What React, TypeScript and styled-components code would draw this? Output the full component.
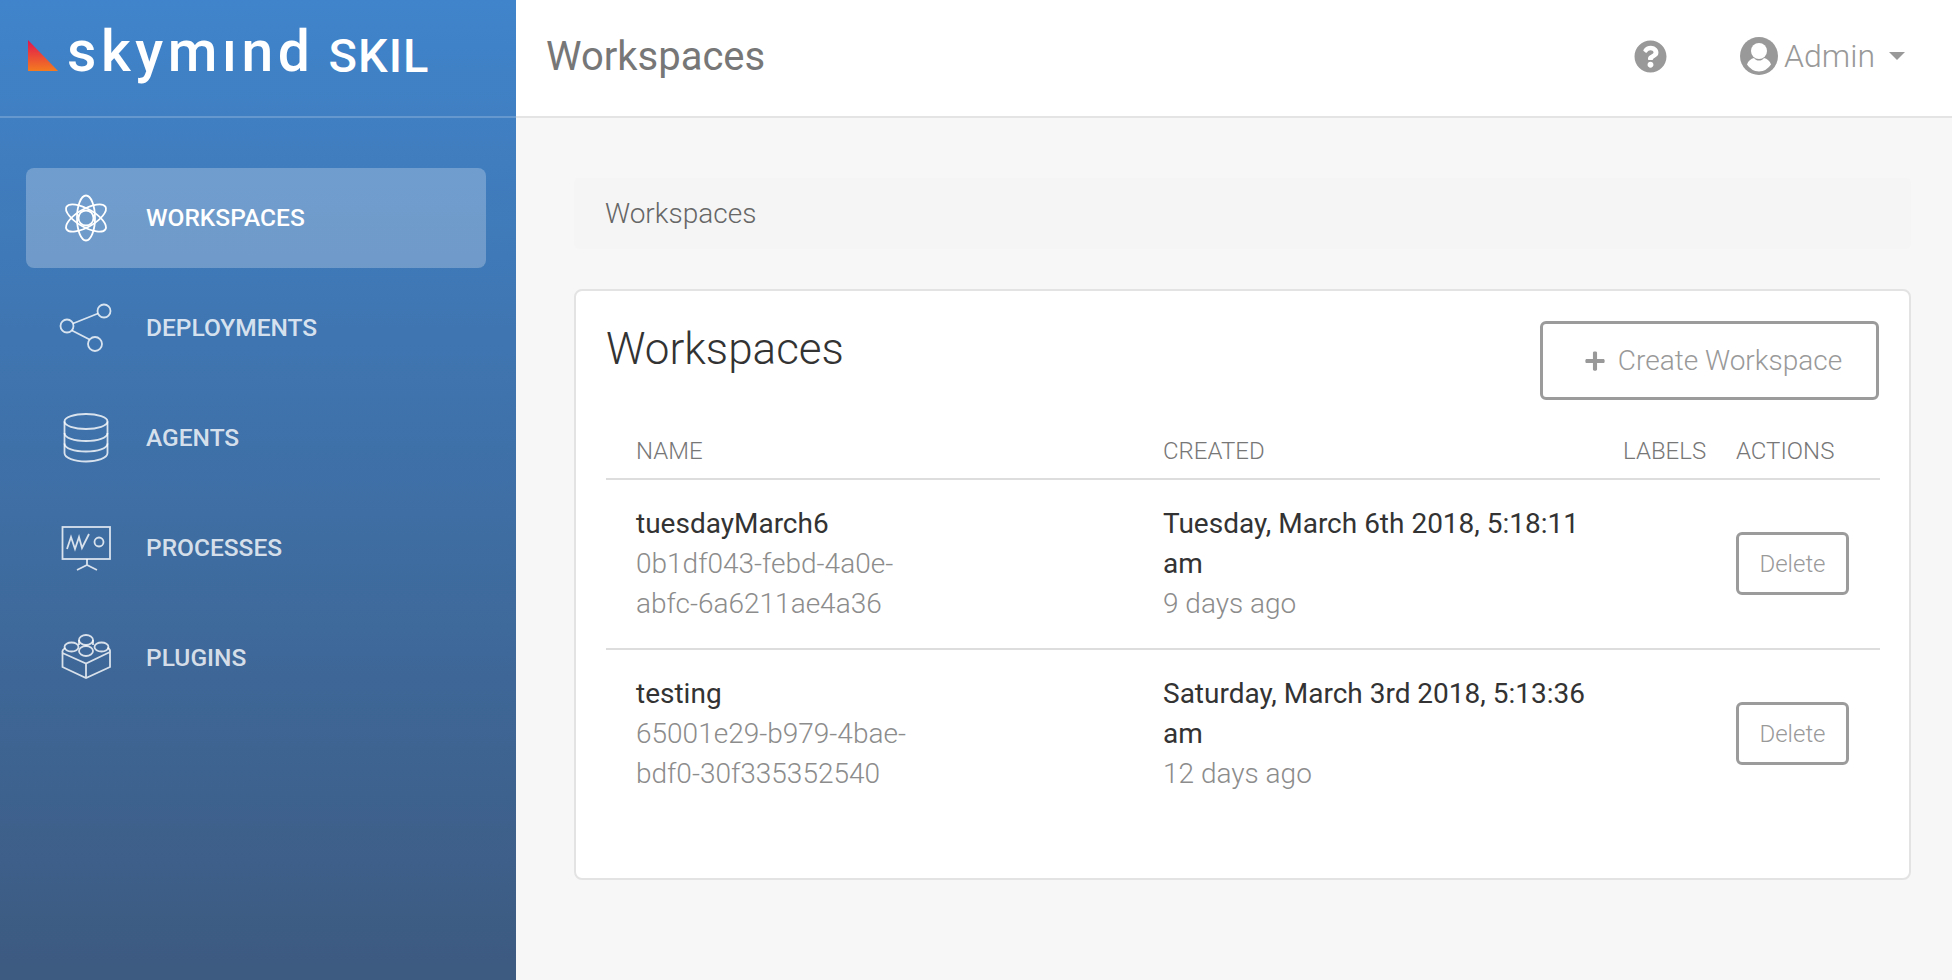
import React from 'react';
import styled, { createGlobalStyle } from 'styled-components';
import { FaPlus, FaQuestionCircle } from 'react-icons/fa';

const GlobalStyle = createGlobalStyle`
  html, body {
    margin: 0;
    height: 100%;
    background: #f7f7f7;
    font-family: Roboto, "Liberation Sans", sans-serif;
  }
  * { box-sizing: border-box; }
`;

const Page = styled.div`
  display: flex;
  height: 980px;
  overflow: hidden;
`;

const Sidebar = styled.aside`
  width: 516px;
  flex-shrink: 0;
  background: linear-gradient(180deg, #4084cb 0%, #3d5a80 100%);
`;

const Brand = styled.div`
  height: 118px;
  border-bottom: 2px solid rgba(255, 255, 255, 0.2);
  display: flex;
  align-items: flex-start;
  padding: 18px 0 0 28px;
  color: #fff;
`;

const LogoMark = styled.svg`
  width: 30px;
  height: 32px;
  margin-top: 22px;
  flex-shrink: 0;
`;

const LogoWord = styled.span`
  margin-left: 9px;
  font-size: 57px;
  line-height: 67px;
  font-weight: 500;
  letter-spacing: 4.6px;
`;

const LogoProduct = styled.span`
  margin-left: 14px;
  margin-top: 10px;
  font-size: 47px;
  line-height: 55px;
  font-weight: 500;
  letter-spacing: 1px;
`;

const Nav = styled.nav`
  display: flex;
  flex-direction: column;
  gap: 10px;
  padding: 50px 30px 0 26px;
`;

const NavItem = styled.a<{ $active?: boolean }>`
  height: 100px;
  padding: 0 0 2px 30px;
  display: flex;
  align-items: center;
  gap: 28px;
  border-radius: 8px;
  font-size: 24.5px;
  font-weight: 500;
  text-transform: uppercase;
  color: ${props => (props.$active ? '#fff' : 'rgba(255, 255, 255, 0.8)')};
  background: ${props => (props.$active ? 'rgba(255, 255, 255, 0.25)' : 'transparent')};
`;

const NavIcon = styled.svg`
  width: 62px;
  height: 56px;
  margin-top: 2px;
  flex-shrink: 0;
  fill: none;
  stroke: currentColor;
  stroke-width: 1.8;
`;

const Main = styled.div`
  flex: 1;
  min-width: 0;
  display: flex;
  flex-direction: column;
`;

const TopBar = styled.header`
  height: 118px;
  flex-shrink: 0;
  background: #fff;
  border-bottom: 2px solid #e4e4e4;
  display: flex;
  align-items: center;
  padding: 0 47px 4px 30px;
  color: #999;
`;

const PageTitle = styled.h1`
  flex: 1;
  margin: 0;
  font-size: 40px;
  font-weight: 400;
  color: #777;
`;

const HelpIcon = styled(FaQuestionCircle)`
  font-size: 33px;
  margin-right: 73px;
`;

const UserMenu = styled.div`
  display: flex;
  align-items: center;
  font-size: 32px;
  font-weight: 300;
`;

const UserIcon = styled.svg`
  width: 38px;
  height: 38px;
  margin-right: 6px;
`;

const Caret = styled.span`
  margin-left: 14px;
  border-top: 8px solid #999;
  border-left: 8px solid transparent;
  border-right: 8px solid transparent;
`;

const Content = styled.main`
  padding: 60px 41px 0 58px;
`;

const Breadcrumb = styled.div`
  height: 71px;
  margin-bottom: 40px;
  padding-left: 31px;
  display: flex;
  align-items: center;
  background: #f5f5f5;
  border-radius: 5px;
  font-size: 28px;
  font-weight: 300;
  color: #666;
`;

const Card = styled.section`
  height: 591px;
  padding: 32px 30px 0;
  background: #fff;
  border: 2px solid #e3e3e3;
  border-radius: 8px;
`;

const CardHeader = styled.div`
  display: flex;
  justify-content: space-between;
  align-items: flex-start;
  height: 109px;
`;

const CardTitle = styled.h2`
  margin: 0;
  font-size: 44px;
  line-height: 52px;
  font-weight: 300;
  color: #333;
`;

const OutlineButton = styled.button<{ $small?: boolean }>`
  display: inline-flex;
  align-items: center;
  justify-content: center;
  gap: 12px;
  width: ${props => (props.$small ? '113px' : '339px')};
  height: ${props => (props.$small ? '63px' : '79px')};
  margin-top: ${props => (props.$small ? '0' : '-2px')};
  padding: ${props => (props.$small ? '0' : '0 0 0 7px')};
  background: #fff;
  border: 3px solid #9b9b9b;
  border-radius: 6px;
  color: #999;
  font-family: inherit;
  font-size: ${props => (props.$small ? '24px' : '28px')};
  font-weight: 300;
`;

const Grid = styled.div`
  display: grid;
  grid-template-columns: 527px 460px 113px 174px;
`;

const HeadCell = styled.div`
  height: 48px;
  padding: 5px 0 0 30px;
  border-bottom: 2px solid #ddd;
  font-size: 24px;
  line-height: 28px;
  font-weight: 300;
  color: #777;
`;

const Cell = styled.div<{ $divider?: boolean }>`
  height: 170px;
  padding: 24px 0 0 30px;
  border-bottom: ${props => (props.$divider ? '2px solid #ddd' : 'none')};
  font-size: 28px;
  line-height: 40px;
  color: #333;
`;

const NameCell = styled(Cell)`
  padding-right: 187px;
`;

const ActionCell = styled(Cell)`
  padding-top: 52px;
`;

const Muted = styled.div`
  font-weight: 300;
  color: #8c8c8c;
`;

const workspaces = [
  {
    name: 'tuesdayMarch6',
    id: '0b1df043-febd-4a0e-abfc-6a6211ae4a36',
    created: 'Tuesday, March 6th 2018, 5:18:11 am',
    ago: '9 days ago'
  },
  {
    name: 'testing',
    id: '65001e29-b979-4bae-bdf0-30f335352540',
    created: 'Saturday, March 3rd 2018, 5:13:36 am',
    ago: '12 days ago'
  }
];

const AtomIcon = () => (
  <NavIcon viewBox="0 0 62 56">
    <ellipse cx="30" cy="28" rx="9" ry="22.5" />
    <ellipse cx="30" cy="28" rx="9" ry="22.5" transform="rotate(60 30 28)" />
    <ellipse cx="30" cy="28" rx="9" ry="22.5" transform="rotate(-60 30 28)" />
    <circle cx="30" cy="28" r="7.5" />
  </NavIcon>
);

const ShareIcon = () => (
  <NavIcon viewBox="0 0 62 56">
    <circle cx="11" cy="26" r="6.5" />
    <circle cx="48" cy="11" r="6.5" />
    <circle cx="39" cy="44" r="7" />
    <path d="M17 23.5 42 13.500M16 30.500 33.500 39.500" />
  </NavIcon>
);

const DatabaseIcon = () => (
  <NavIcon viewBox="0 0 62 56">
    <ellipse cx="30" cy="11.500" rx="21.500" ry="7.500" />
    <path d="M8.500 11.500V43c0 5 10 8.500 21.500 8.500S51.500 48 51.500 43V11.500" />
    <path d="M8.500 23c0 5 10 8 21.500 8s21.500-3 21.500-8M8.500 33.500c0 5 10 8 21.500 8s21.500-3 21.500-8" />
  </NavIcon>
);

const BoardIcon = () => (
  <NavIcon viewBox="0 0 62 56">
    <rect x="6.500" y="7" width="47.500" height="32" />
    <path d="M11 29 15 17l4 12 4-12 3 11 7-14" />
    <circle cx="43" cy="22" r="4.500" />
    <path d="M31 39v6M21 50l10-5 10 5" />
  </NavIcon>
);

const LegoIcon = () => (
  <NavIcon viewBox="0 0 62 56">
    <path d="M6.500 23v14L30 48l24-11V22M6.500 23 30 33.500 54 22M30 33.500V48" />
    <path d="M6.500 23c-.5-2 1-4 3-5M54 22c.5-2-1-3.500-2.500-4.500" />
    <ellipse cx="30" cy="10" rx="7" ry="5" />
    <ellipse cx="15.500" cy="17" rx="7" ry="4.500" />
    <ellipse cx="45.500" cy="17" rx="7" ry="4.500" />
    <ellipse cx="30" cy="21" rx="7" ry="5" />
    <path d="M23 10v5M37 10v5" />
  </NavIcon>
);

const navItems = [
  { label: 'Workspaces', icon: <AtomIcon />, active: true },
  { label: 'Deployments', icon: <ShareIcon /> },
  { label: 'Agents', icon: <DatabaseIcon /> },
  { label: 'Processes', icon: <BoardIcon /> },
  { label: 'Plugins', icon: <LegoIcon /> }
];

export default function App() {
  return (
    <Page>
      <GlobalStyle />
      <Sidebar>
        <Brand>
          <LogoMark viewBox="0 0 30 32">
            <defs>
              <linearGradient id="logoFill" x1="0" y1="0" x2="0" y2="1">
                <stop offset="0" stopColor="#e0134f" />
                <stop offset="1" stopColor="#f47b20" />
              </linearGradient>
            </defs>
            <path d="M0 0 30 31H0Z" fill="url(#logoFill)" />
          </LogoMark>
          <LogoWord aria-label="skymind">skymınd</LogoWord>
          <LogoProduct>SKIL</LogoProduct>
        </Brand>
        <Nav>
          {navItems.map(item => (
            <NavItem key={item.label} $active={item.active}>
              {item.icon}
              {item.label}
            </NavItem>
          ))}
        </Nav>
      </Sidebar>
      <Main>
        <TopBar>
          <PageTitle>Workspaces</PageTitle>
          <HelpIcon />
          <UserMenu>
            <UserIcon viewBox="0 0 38 38">
              <circle cx="19" cy="19" r="19" fill="#999" />
              <circle cx="19" cy="14" r="8" fill="#fff" />
              <path
                d="M7 27.500C8 24 11 21.500 14 21c1.500 2 3 2.600 5 2.600s3.500-.6 5-2.600c3 .5 6 3 7 6.500A15.500 15.500 0 0 1 19 34.500 15.500 15.500 0 0 1 7 27.500Z"
                fill="#fff"
              />
            </UserIcon>
            Admin
            <Caret />
          </UserMenu>
        </TopBar>
        <Content>
          <Breadcrumb>Workspaces</Breadcrumb>
          <Card>
            <CardHeader>
              <CardTitle>Workspaces</CardTitle>
              <OutlineButton>
                <FaPlus size={22} />
                Create Workspace
              </OutlineButton>
            </CardHeader>
            <Grid>
              <HeadCell>NAME</HeadCell>
              <HeadCell>CREATED</HeadCell>
              <HeadCell>LABELS</HeadCell>
              <HeadCell>ACTIONS</HeadCell>
              {workspaces.map((ws, i) => {
                const divider = i < workspaces.length - 1;
                return (
                  <React.Fragment key={ws.id}>
                    <NameCell $divider={divider}>
                      {ws.name}
                      <Muted>{ws.id}</Muted>
                    </NameCell>
                    <Cell $divider={divider}>
                      {ws.created}
                      <Muted>{ws.ago}</Muted>
                    </Cell>
                    <Cell $divider={divider} />
                    <ActionCell $divider={divider}>
                      <OutlineButton $small>Delete</OutlineButton>
                    </ActionCell>
                  </React.Fragment>
                );
              })}
            </Grid>
          </Card>
        </Content>
      </Main>
    </Page>
  );
}
